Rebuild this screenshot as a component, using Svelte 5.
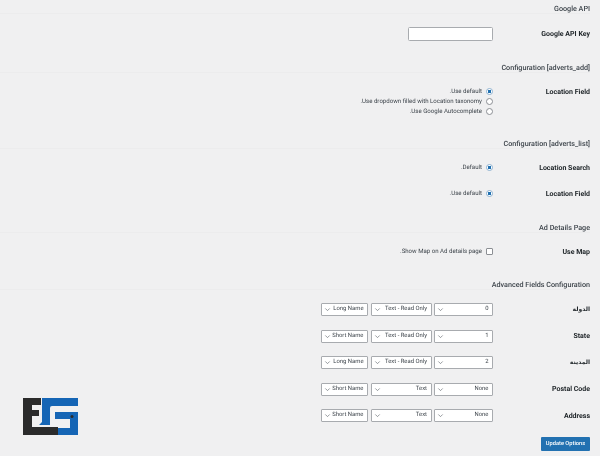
<script>
  const radios = ['Use default.', 'Use dropdown filled with Location taxonomy.', 'Use Google Autocomplete.'];
  const fields = [
    { label: 'الدولة', ar: true, a: '0', b: 'Text - Read Only', c: 'Long Name' },
    { label: 'State', a: '1', b: 'Text - Read Only', c: 'Short Name' },
    { label: 'المدينة', ar: true, a: '2', b: 'Text - Read Only', c: 'Long Name' },
    { label: 'Postal Code', a: 'None', b: 'Text', c: 'Short Name' },
    { label: 'Address', a: 'None', b: 'Text', c: 'Short Name' }
  ];
</script>

<main dir="rtl">
  <h2 class="first">Google API</h2>
  <div class="row key">
    <span class="label">Google API Key</span>
    <div class="control"><input type="text" /></div>
  </div>

  <h2>Configuration [adverts_add]</h2>
  <div class="row group">
    <span class="label">Location Field</span>
    <div class="control stack">
      {#each radios as text, i}
        <label class="opt"><input type="radio" name="add" checked={i === 0} /><span>{text}</span></label>
      {/each}
    </div>
  </div>

  <h2>Configuration [adverts_list]</h2>
  <div class="row group">
    <span class="label">Location Search</span>
    <div class="control"><label class="opt"><input type="radio" name="s" checked /><span>Default.</span></label></div>
  </div>
  <div class="row next">
    <span class="label">Location Field</span>
    <div class="control"><label class="opt"><input type="radio" name="f" checked /><span>Use default.</span></label></div>
  </div>

  <h2 class="ad">Ad Details Page</h2>
  <div class="row group">
    <span class="label">Use Map</span>
    <div class="control"><label class="opt"><input type="checkbox" /><span>Show Map on Ad details page.</span></label></div>
  </div>

  <h2 class="adv">Advanced Fields Configuration</h2>
  <div class="fields">
    {#each fields as f}
      <div class="row field">
        <span class="label" class:ar={f.ar}>{f.label}</span>
        <div class="control selects">
          {#each [f.a, f.b, f.c] as value, i}
            <div class="select s{i}">
              <select><option>{value}</option></select>
              <svg viewBox="0 0 8 8" aria-hidden="true"><path d="M1.5 2.8 4 5.3l2.500-2.500" /></svg>
            </div>
          {/each}
        </div>
      </div>
    {/each}
  </div>

  <div class="actions"><button type="button">Update Options</button></div>

  <svg class="logo" viewBox="0 0 55 37" aria-hidden="true">
    <path fill="#2b2b2b" d="M0 0H18V7H9V12H16V18H9V29H35V37H0Z" />
    <path fill="#1565b5" d="M19 0H55V8H29Q27 8 27 10V27H16L19 24Z" />
    <path fill="#1565b5" d="M32 14H55V37H35V30H47V21H32Z" />
    <circle fill="#2b2b2b" cx="49" cy="18.500" r="1.500" />
  </svg>
</main>

<style>
  :global(body) {
    margin: 0;
    background: #f0f0f1;
  }
  main {
    position: relative;
    box-sizing: border-box;
    height: 456px;
    overflow: hidden;
    padding: 2px 10px 0 0;
    background: #f0f0f1;
    color: #3c434a;
    font: 7px/10px Roboto, "DejaVu Sans", sans-serif;
    text-rendering: geometricPrecision;
    filter: blur(0.25px);
  }
  h2 {
    box-sizing: border-box;
    height: 12px;
    margin: 20px 0 0 0;
    padding-top: 0.500px;
    color: #3c434a;
    font-size: 7.200px;
    font-weight: 500;
    line-height: 12px;
    border-bottom: 1px solid #ececed;
  }
  h2.first { margin-top: 0; }
  h2.ad { margin-top: 22px; }
  h2.adv { margin-top: 21px; }
  .row {
    display: flex;
    align-items: flex-start;
  }
  .label {
    flex: 0 0 97px;
    color: #1d2327;
    font-weight: 700;
  }
  .label.ar { font-size: 6px; }
  .group { margin-top: 14px; }
  .next { margin-top: 16px; }
  .key { align-items: center; height: 14px; margin-top: 13px; }
  .stack {
    display: flex;
    flex-direction: column;
  }
  .opt {
    display: flex;
    align-items: center;
    gap: 4px;
    height: 10px;
    color: #3c434a;
    font-size: 6.100px;
  }
  input[type="text"] {
    box-sizing: border-box;
    display: block;
    width: 85px;
    height: 14px;
    margin: 0;
    background: #fff;
    border: 1px solid #a8abaf;
    border-radius: 1.500px;
  }
  input[type="radio"],
  input[type="checkbox"] {
    box-sizing: border-box;
    appearance: none;
    display: block;
    width: 7px;
    height: 7px;
    margin: 0 0 1.500px;
    background: #fff;
    border: 0.7px solid #8c8f94;
    border-radius: 50%;
  }
  input[type="checkbox"] { border-radius: 1px; }
  input[type="radio"]:checked {
    border-color: #8fb3d1;
    background: radial-gradient(circle, #2271b1 0 1.500px, #fff 2px);
  }
  .fields {
    display: flex;
    flex-direction: column;
    gap: 13.500px;
    margin-top: 13px;
  }
  .field { align-items: center; height: 13px; }
  .selects {
    display: flex;
    gap: 2.500px;
  }
  .select { position: relative; height: 13px; }
  .s0 { width: 59px; }
  .s1 { width: 61px; }
  .s2 { width: 47px; }
  select {
    box-sizing: border-box;
    appearance: none;
    display: block;
    width: 100%;
    height: 13px;
    margin: 0;
    padding: 0 3.500px 0 0;
    background: #fff;
    border: 0.7px solid #a8abaf;
    border-radius: 1px;
    color: #3c434a;
    font: 5.900px/11px Roboto, "DejaVu Sans", sans-serif;
    text-rendering: geometricPrecision;
  }
  .select svg {
    position: absolute;
    left: 3px;
    top: 3px;
    width: 7px;
    height: 7px;
    fill: none;
    stroke: #6b7177;
    stroke-width: 0.8;
    pointer-events: none;
  }
  .actions { margin-top: 15px; }
  button {
    display: block;
    width: 49px;
    height: 14px;
    padding: 0;
    background: #2271b1;
    border: 0;
    border-radius: 1px;
    color: #fff;
    font: 500 5.700px/14px Roboto, sans-serif;
    text-rendering: geometricPrecision;
    white-space: nowrap;
  }
  .logo {
    position: absolute;
    left: 23px;
    top: 398px;
    width: 55px;
    height: 37px;
  }
</style>
